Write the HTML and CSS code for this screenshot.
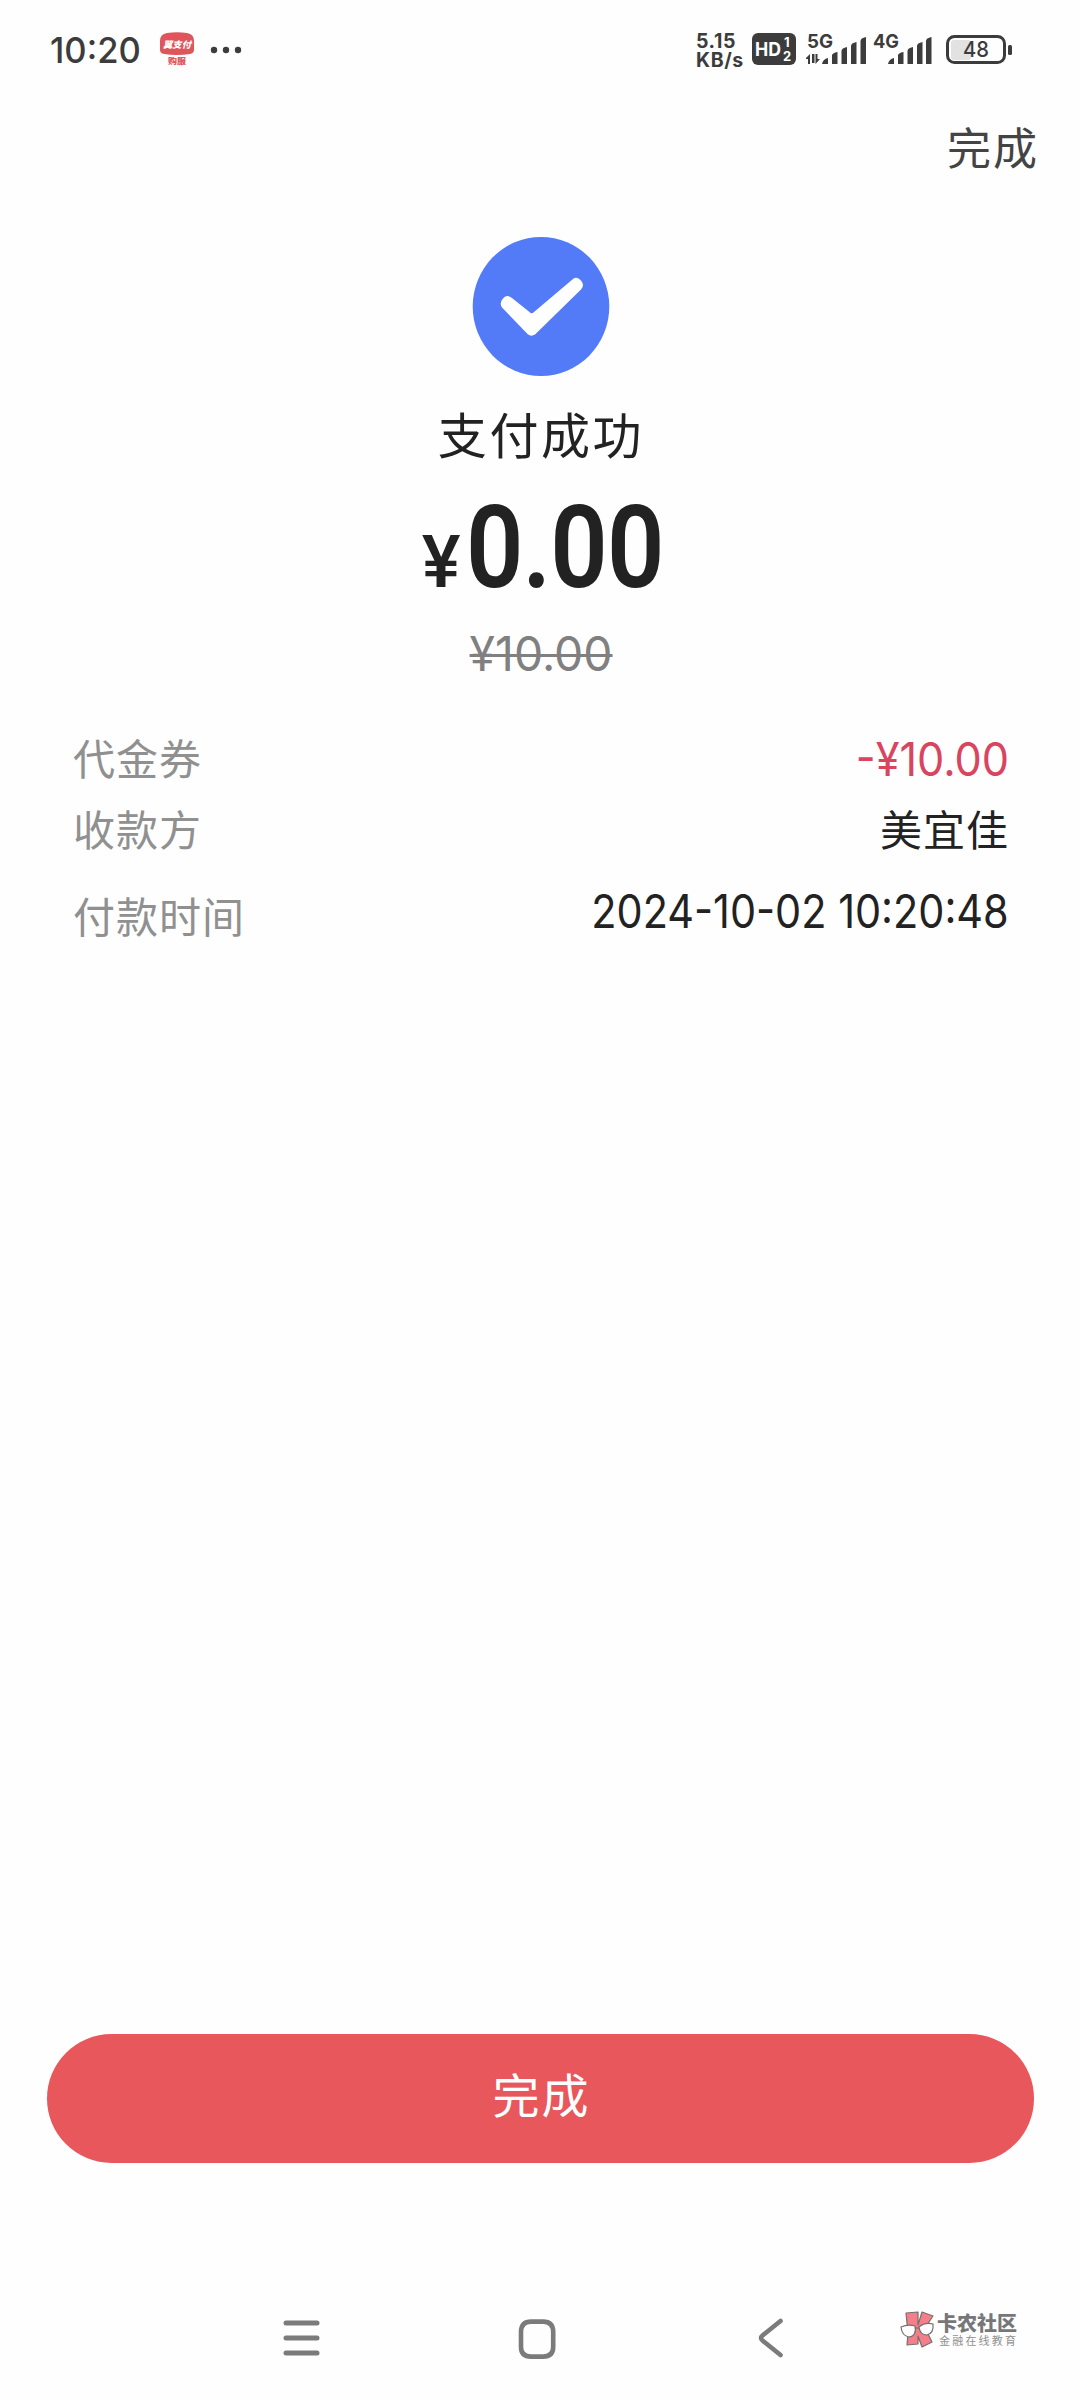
FILE: index.html
```html
<!DOCTYPE html>
<html lang="zh-CN">
<head>
<meta charset="utf-8">
<title>支付成功</title>
<link rel="stylesheet" href="styles.css">
</head>
<body>
<div class="screen">
  <header class="status">
    <span class="clock">10:20</span>
    <svg class="app-icon" width="36" height="38" viewBox="0 0 36 38">
      <path d="M8 1Q18-.6 28 1Q35 2 35 9V18Q35 21 31 22Q18 24 5 22Q1 21 1 18V9Q1 2 8 1Z" fill="#e0545c"/>
      <text class="app-name" x="18" y="16" text-anchor="middle" textLength="28" lengthAdjust="spacingAndGlyphs">翼支付</text>
      <text class="app-sub" x="18" y="32" text-anchor="middle" textLength="18" lengthAdjust="spacingAndGlyphs">购服</text>
    </svg>
    <svg class="dots" width="32" height="8" viewBox="0 0 32 8"><g fill="#3c3c3c"><circle cx="4" cy="4" r="3.2"/><circle cx="16" cy="4" r="3.2"/><circle cx="28" cy="4" r="3.2"/></g></svg>
    <div class="net"><span>5.15</span><span>KB/s</span></div>
    <svg class="hd" width="44" height="32" viewBox="0 0 44 32">
      <rect width="44" height="32" rx="6" fill="#3c3c3c"/>
      <text class="hd-main" x="3" y="22.500" textLength="26" lengthAdjust="spacingAndGlyphs">HD</text>
      <text class="hd-num" x="32" y="14">1</text><text class="hd-num" x="31" y="28">2</text>
    </svg>
    <svg class="signal" width="134" height="42" viewBox="0 -8 134 42">
      <g class="net-type"><text x="1" y="15" textLength="26" lengthAdjust="spacingAndGlyphs">5G</text><text x="67" y="15" textLength="26" lengthAdjust="spacingAndGlyphs">4G</text></g>
      <path d="M0 25L4 21V31H2V26H0ZM6 21H8.500V30H6ZM9.500 21H11.500V26H14L9.500 31Z" fill="#3c3c3c"/>
      <g fill="#3c3c3c">
        <path d="M16 31Q17 26 22 25V31ZM26 22.500Q26 20 31.500 19V31H26ZM35.500 18Q35.500 15 41 14V31H35.500ZM45 13Q45 10 50.500 9V31H45ZM54.500 8Q54.500 5 60 4V31H54.500Z"/>
        <path d="M82 31Q83 26 88 25V31ZM92 22.500Q92 20 97.500 19V31H92ZM101.500 18Q101.500 15 107 14V31H101.500ZM111 13Q111 10 116.500 9V31H111ZM120 8Q120 5 125.500 4V31H120Z"/>
      </g>
    </svg>
    <svg class="battery" width="66" height="30" viewBox="0 0 66 30">
      <rect x="5" y="5" width="20" height="20" rx="3" fill="#e2e2e2"/>
      <rect x="1.500" y="1.500" width="57" height="26" rx="7" fill="none" stroke="#3c3c3c" stroke-width="3"/>
      <rect x="62" y="10" width="4" height="10" rx="1.500" fill="#3c3c3c"/>
      <text class="level" x="30" y="22" text-anchor="middle" textLength="26" lengthAdjust="spacingAndGlyphs">48</text>
    </svg>
  </header>

  <nav class="top"><span class="done">完成</span></nav>

  <main class="result">
    <svg class="check" width="138" height="140" viewBox="0 0 138 140">
      <ellipse cx="69" cy="69.500" rx="68.300" ry="69.500" fill="#537bf7"/>
      <path d="M31 61.500Q35 57 40 61L57.500 75Q59.500 77.500 62 75L101 42Q105 39 109 43.500Q113 48.500 109 52.500L63 97.500Q59 100 55.500 97L30 70.500Q27 66 31 61.500Z" fill="#fff"/>
    </svg>
    <h1 class="title">支付成功</h1>
    <div class="amount"><span class="yen">¥</span><span class="value">0.00</span></div>
    <div class="original">¥10.00</div>
  </main>

  <section class="details">
    <div class="row"><span class="label">代金券</span><span class="num discount">-¥10.00</span></div>
    <div class="row payee"><span class="label">收款方</span><span class="name">美宜佳</span></div>
    <div class="row time"><span class="label">付款时间</span><span class="num date">2024-10-02 10:20:48</span></div>
  </section>

  <button class="submit">完成</button>

  <footer class="bottom">
    <svg class="menu" width="38" height="38" viewBox="0 0 38 38"><path d="M3 4H34M3 19H34M3 34H34" stroke="#7b7b7b" stroke-width="5" stroke-linecap="round"/></svg>
    <svg class="home" width="40" height="42" viewBox="0 0 40 42"><path d="M13 2.600H25Q35.200 2.600 35.200 13V28Q35.200 37.600 25 37.600H13Q3 37.600 3 28V13Q3 2.600 13 2.600Z" fill="none" stroke="#7b7b7b" stroke-width="4.600"/></svg>
    <svg class="back" width="26" height="42" viewBox="0 0 26 42"><path d="M22.500 3L4.500 17.500Q1.500 20 4.500 22.500L22.500 37" fill="none" stroke="#7b7b7b" stroke-width="4.600" stroke-linecap="round"/></svg>
    <div class="brand">
      <svg width="36" height="38" viewBox="0 0 36 38">
        <path d="M6 2L18 1V14L22 1L33 5L25 17L32 31L22 36L18 25V33L7 34L8 22Z" fill="#f57f88" stroke="#776e70" stroke-width="1.200" stroke-linejoin="round"/>
        <g fill="#fff" stroke="#776e70" stroke-width="1.200"><path d="M1 16Q8 13 15 15Q17 25 9 26Q2 25 1 16Z"/><path d="M19 16Q25 11 33 13Q34 22 27 24Q20 24 19 16Z"/><path d="M15 17L19 17"/></g>
      </svg>
      <div class="brand-text"><b>卡农社区</b><small>金融在线教育</small></div>
    </div>
  </footer>
</div>
</body>
</html>
```

FILE: styles.css
```css
* { box-sizing: border-box; }
body { margin: 0; background: #fefefe; }
.screen { width: 1080px; height: 2400px; display: flex; flex-direction: column; font-family: Inter, "Noto Sans CJK SC", sans-serif; color: #222; overflow: hidden; }
.screen svg { display: block; flex: none; }

.status { height: 100px; display: flex; align-items: flex-start; padding: 32px 0 0 50px; color: #3c3c3c; }
.clock { width: 109px; font-size: 36px; line-height: 36px; font-weight: 500; white-space: nowrap; transform: scaleX(.96); transform-origin: left; }
.app-name { font: 900 italic 9px "Noto Sans CJK SC", sans-serif; fill: #fff; }
.app-sub { font: 900 8px "Noto Sans CJK SC", sans-serif; fill: #e0545c; }
.dots { margin: 14px 0 0 15px; }
.net { width: 56px; margin-left: 454px; display: flex; flex-direction: column; font-size: 19.500px; line-height: 19px; font-weight: 700; letter-spacing: .6px; }
.hd { margin-top: 1px; }
.hd-main { font: 700 19px Inter, sans-serif; fill: #fff; }
.hd-num { font: 700 13px Inter, sans-serif; fill: #fff; }
.signal { margin: -7px 0 0 10px; }
.net-type { font: 700 19px Inter, sans-serif; fill: #3c3c3c; }
.battery { margin: 3px 0 0 6px; }
.level { font: 500 22px Inter, sans-serif; fill: #3c3c3c; }

.top { height: 100px; display: flex; justify-content: flex-end; padding: 17px 41px 0 0; }
.done { font-size: 44px; line-height: 64px; letter-spacing: 2px; color: #444; }

.result { display: flex; flex-direction: column; align-items: center; padding: 37px 0 0 2px; }
.title { margin: 25px 0 0; font-size: 49px; line-height: 70px; font-weight: 400; letter-spacing: 2.600px; }
.amount { height: 120px; margin-top: 16px; display: flex; align-items: baseline; font-family: Roboto, sans-serif; font-weight: 500; line-height: 120px; }
.yen { font-size: 73px; }
.value { margin: 0 -31px 0 5px; font-size: 115px; font-weight: 600; letter-spacing: -1px; transform: scaleX(.875); transform-origin: left; }
.original { margin-top: 16px; font-size: 48px; line-height: 60px; color: #808080; text-decoration: line-through; text-decoration-thickness: 3px; transform: scaleX(.965); }

.details { padding: 41px 71px 0 73px; }
.row { height: 70px; display: flex; justify-content: space-between; font-size: 42px; line-height: 70px; }
.payee { padding-top: 1px; }
.label { color: #909090; letter-spacing: 1px; }
.name { letter-spacing: 1px; }
.num { font-size: 46px; transform: scaleX(.9); transform-origin: right; }
.discount { margin-top: -1px; color: #d9455f; transform: scaleX(.94); }
.time { margin-top: 18px; }
.date { margin-top: -7px; }

.submit { width: 987px; height: 129px; margin: auto 0 0 47px; padding: 0 0 12px 2px; border: 0; border-radius: 65px; background: #e8575b; color: #fff; font: 400 47px "Noto Sans CJK SC", sans-serif; letter-spacing: 2px; }

.bottom { height: 237px; display: flex; align-items: flex-start; padding: 155px 0 0 283px; }
.menu { margin-top: 1px; }
.home { margin: 1px 0 0 197px; }
.back { margin-left: 200px; }
.brand { display: flex; margin: -7px 0 0 116px; }
.brand-text { display: flex; flex-direction: column; margin-left: 1px; white-space: nowrap; font-family: "Noto Sans CJK SC", sans-serif; }
.brand-text b { font-size: 20px; line-height: 24px; font-weight: 900; color: #77777a; }
.brand-text small { margin-left: 2px; font-size: 11px; line-height: 11px; letter-spacing: 2.200px; color: #909090; }
```
